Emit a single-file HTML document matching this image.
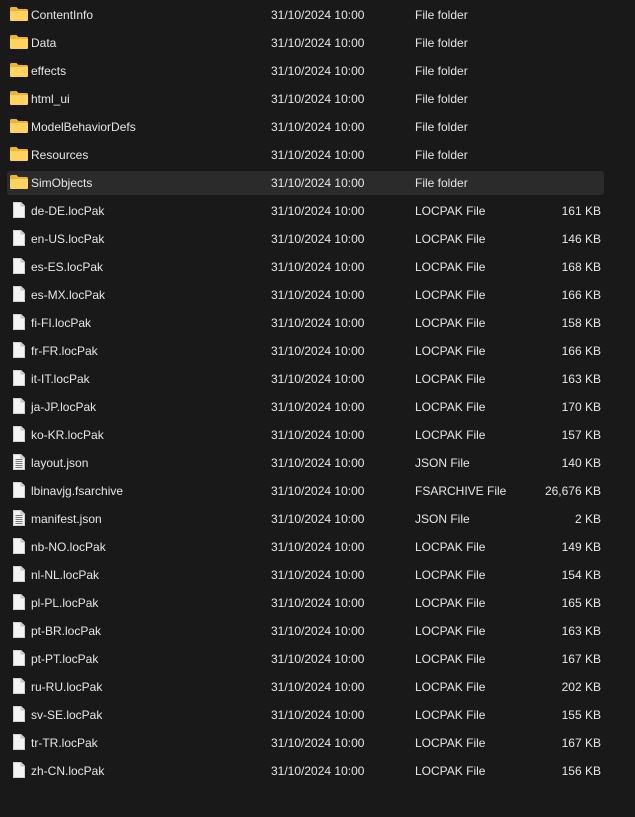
<!DOCTYPE html>
<html><head><style>
body{margin:0;background:#191919;width:635px;height:817px;overflow:hidden;font-family:"Liberation Sans",sans-serif;font-size:12px;color:#e6e6e6}
.r{position:absolute;left:7px;width:597px;height:24px;}
.r.sel{background:#2b2b2b;border-radius:3px}
.r span{position:absolute;top:5px;white-space:nowrap}
.n{left:24px}.d{left:264px}.t{left:408px}.s{right:3px}
.ic{position:absolute;left:3px;top:4px}
</style></head><body>
<svg width="0" height="0" style="position:absolute"><defs>
<symbol id="fo" viewBox="0 0 18 14"><path d="M0 1.5Q0 0 1.5 0H6.5L8.5 2H16.5Q18 2 18 3.5V12.5Q18 14 16.5 14H1.5Q0 14 0 12.5Z" fill="#e8b53a"/><path d="M0 4H18V12.5Q18 14 16.5 14H1.5Q0 14 0 12.5Z" fill="#ffd45e"/></symbol>
<symbol id="fi" viewBox="0 0 12 16"><path d="M0.5 0.5H8L11.5 4V15.5H0.5Z" fill="#f4f4f4" stroke="#cfcfcf"/><path d="M8 0.5V4H11.5" fill="#d8d8d8" stroke="#bbb"/></symbol>
<symbol id="fj" viewBox="0 0 12 16"><path d="M0.5 0.5H8L11.5 4V15.5H0.5Z" fill="#f4f4f4" stroke="#cfcfcf"/><path d="M8 0.5V4H11.5" fill="#d8d8d8" stroke="#bbb"/><path d="M2.5 5.5H9.5M2.5 7.5H9.5M2.5 9.5H9.5M2.5 11.5H9.5M2.5 13.5H9.5" stroke="#777" stroke-width="1"/></symbol>
</defs></svg>
<div id="list"></div>
<script>
var rows=[
["f","ContentInfo","File folder",""],["f","Data","File folder",""],["f","effects","File folder",""],["f","html_ui","File folder",""],["f","ModelBehaviorDefs","File folder",""],["f","Resources","File folder",""],["f","SimObjects","File folder",""],
["p","de-DE.locPak","LOCPAK File","161 KB"],["p","en-US.locPak","LOCPAK File","146 KB"],["p","es-ES.locPak","LOCPAK File","168 KB"],["p","es-MX.locPak","LOCPAK File","166 KB"],["p","fi-FI.locPak","LOCPAK File","158 KB"],["p","fr-FR.locPak","LOCPAK File","166 KB"],["p","it-IT.locPak","LOCPAK File","163 KB"],["p","ja-JP.locPak","LOCPAK File","170 KB"],["p","ko-KR.locPak","LOCPAK File","157 KB"],
["j","layout.json","JSON File","140 KB"],["p","lbinavjg.fsarchive","FSARCHIVE File","26,676 KB"],["j","manifest.json","JSON File","2 KB"],
["p","nb-NO.locPak","LOCPAK File","149 KB"],["p","nl-NL.locPak","LOCPAK File","154 KB"],["p","pl-PL.locPak","LOCPAK File","165 KB"],["p","pt-BR.locPak","LOCPAK File","163 KB"],["p","pt-PT.locPak","LOCPAK File","167 KB"],["p","ru-RU.locPak","LOCPAK File","202 KB"],["p","sv-SE.locPak","LOCPAK File","155 KB"],["p","tr-TR.locPak","LOCPAK File","167 KB"],["p","zh-CN.locPak","LOCPAK File","156 KB"]];
var h="";
rows.forEach(function(r,i){
var top=3+28*i;
var ic=r[0]=="f"?'<svg class="ic" style="top:4px" width="18" height="14"><use href="#fo"/></svg>':'<svg class="ic" style="left:6px;top:3px" width="12" height="16"><use href="#'+(r[0]=="j"?"fj":"fi")+'"/></svg>';
h+='<div class="r'+(i==6?' sel':'')+'" style="top:'+top+'px">'+ic+'<span class="n">'+r[1]+'</span><span class="d">31/10/2024 10:00</span><span class="t">'+r[2]+'</span><span class="s">'+r[3]+'</span></div>';
});
document.getElementById("list").innerHTML=h;
</script>
</body></html>
